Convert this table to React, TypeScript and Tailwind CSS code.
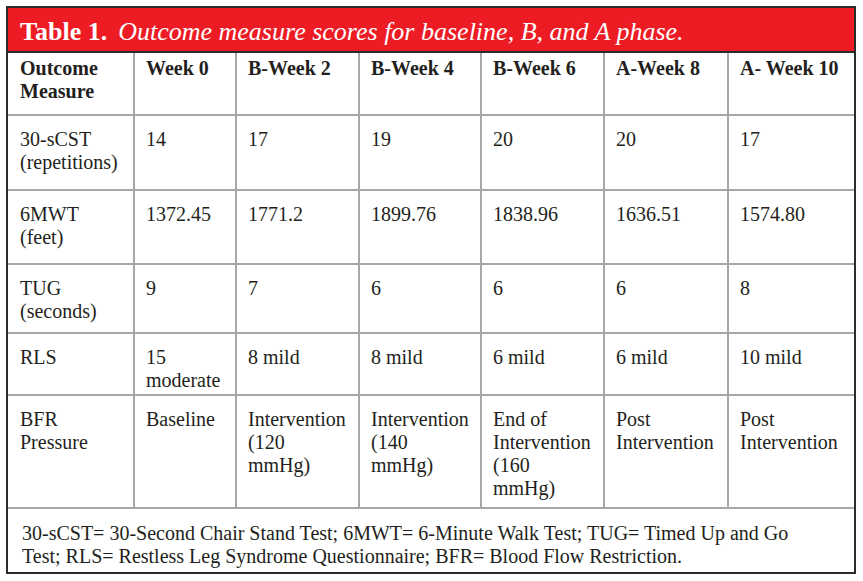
const rows: { label: string[]; cells: string[][] }[] = [
  {
    label: ['30-sCST', '(repetitions)'],
    cells: [['14'], ['17'], ['19'], ['20'], ['20'], ['17']],
  },
  {
    label: ['6MWT', '(feet)'],
    cells: [['1372.45'], ['1771.2'], ['1899.76'], ['1838.96'], ['1636.51'], ['1574.80']],
  },
  {
    label: ['TUG', '(seconds)'],
    cells: [['9'], ['7'], ['6'], ['6'], ['6'], ['8']],
  },
  {
    label: ['RLS'],
    cells: [['15', 'moderate'], ['8 mild'], ['8 mild'], ['6 mild'], ['6 mild'], ['10 mild']],
  },
  {
    label: ['BFR', 'Pressure'],
    cells: [
      ['Baseline'],
      ['Intervention', '(120', 'mmHg)'],
      ['Intervention', '(140', 'mmHg)'],
      ['End of', 'Intervention', '(160', 'mmHg)'],
      ['Post', 'Intervention'],
      ['Post', 'Intervention'],
    ],
  },
]

const rowHeights = ['h-[75px]', 'h-[74px]', 'h-[69px]', 'h-[62px]', 'h-[113px]']
const headers = ['Week 0', 'B-Week 2', 'B-Week 4', 'B-Week 6', 'A-Week 8', 'A- Week 10']
const colWidths = ['w-[126px]', 'w-[102px]', 'w-[123px]', 'w-[122px]', 'w-[123px]', 'w-[124px]', 'w-[126px]']

function Lines({ lines }: { lines: string[] }) {
  return (
    <>
      {lines.map((l, i) => (
        <div key={i}>{l}</div>
      ))}
    </>
  )
}

export default function App() {
  return (
    <div className="w-[863px] h-[581px] bg-white pt-[6px] pl-[6px] font-['Liberation_Serif','Times_New_Roman',serif] text-[20px] leading-[23px] text-[#231f20]">
      <div className="w-[850px] h-[568px] border-2 border-[#2b2b2b] flex flex-col">
        {/* Title bar */}
        <div className="h-[45px] shrink-0 bg-[#ed1c24] border-b-2 border-[#2b2b2b] flex items-center pl-[12px] pt-[4px] text-white text-[26px]">
          <span className="font-bold">Table 1.</span>
          <span className="italic ml-[11px]">Outcome measure scores for baseline, B, and A phase.</span>
        </div>

        <table className="table-fixed border-collapse w-full">
          <colgroup>
            {colWidths.map((w, i) => (
              <col key={i} className={w} />
            ))}
          </colgroup>
          <thead>
            <tr className="h-[62px]">
              <th className="border-2 border-t-0 border-l-0 border-[#a7a7a7] align-top text-left font-bold pl-[12px] pt-[4px]">
                <Lines lines={['Outcome', 'Measure']} />
              </th>
              {headers.map((h, i) => (
                <th
                  key={h}
                  className={`border-2 border-t-0 border-[#a7a7a7] align-top text-left font-bold pl-[11px] pt-[4px] ${i === headers.length - 1 ? 'border-r-0' : ''}`}
                >
                  {h}
                </th>
              ))}
            </tr>
          </thead>
          <tbody>
            {rows.map((row, r) => (
              <tr key={r} className={rowHeights[r]}>
                <td className="border-2 border-l-0 border-[#a7a7a7] align-top pl-[12px] pt-[12px]">
                  <Lines lines={row.label} />
                </td>
                {row.cells.map((c, i) => (
                  <td
                    key={i}
                    className={`border-2 border-[#a7a7a7] align-top pl-[11px] pt-[12px] ${i === row.cells.length - 1 ? 'border-r-0' : ''}`}
                  >
                    <Lines lines={c} />
                  </td>
                ))}
              </tr>
            ))}
          </tbody>
        </table>

        {/* Footnote */}
        <div className="flex-1 pl-[14px] pr-[40px] pt-[13px]">
          30-sCST= 30-Second Chair Stand Test; 6MWT= 6-Minute Walk Test; TUG= Timed Up and Go Test; RLS= Restless Leg Syndrome Questionnaire; BFR= Blood Flow Restriction.
        </div>
      </div>
    </div>
  )
}
